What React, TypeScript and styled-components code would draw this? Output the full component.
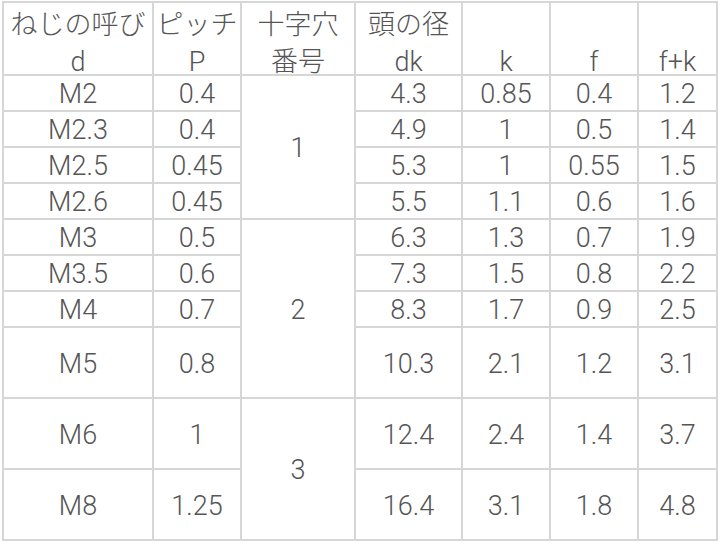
import React from "react";
import styled, { createGlobalStyle } from "styled-components";

const Global = createGlobalStyle`
  html, body { margin: 0; padding: 0; background: #ffffff; }
  body { font-family: Roboto, "Noto Sans CJK JP", sans-serif; }
`;

const Page = styled.div`
  padding: 1px 0 0 2px;
`;

const Table = styled.table`
  border-collapse: collapse;
  table-layout: fixed;
  width: 715px;
  border: 2px solid #c8c8c8;
  font-family: Roboto, "Noto Sans CJK JP", sans-serif;
  font-size: 27px;
  font-weight: 300;
  color: #555555;
`;

const Cell = styled.td<{ $h?: number }>`
  border: 2px solid #d6d6d6;
  text-align: center;
  vertical-align: middle;
  padding: 3px 0 0 0;
  height: ${(p) => (p.$h ?? 34) - 3}px;
  line-height: 31px;
  white-space: nowrap;
`;

const Head = styled.td`
  border: 2px solid #d6d6d6;
  text-align: center;
  vertical-align: top;
  padding: 0;
  height: 71px;
  white-space: nowrap;
`;

const HeadTop = styled.span`
  display: block;
  height: 47px;
  line-height: 44px;
`;

const HeadBottom = styled.span`
  display: block;
  height: 24px;
  line-height: 24px;
`;

type Row = { d: string; p: string; dk: string; k: string; f: string; fk: string; h: number; no?: string; span?: number };

const rows: Row[] = [
  { d: "M2", p: "0.4", dk: "4.3", k: "0.85", f: "0.4", fk: "1.2", h: 34, no: "1", span: 4 },
  { d: "M2.3", p: "0.4", dk: "4.9", k: "1", f: "0.5", fk: "1.4", h: 34 },
  { d: "M2.5", p: "0.45", dk: "5.3", k: "1", f: "0.55", fk: "1.5", h: 34 },
  { d: "M2.6", p: "0.45", dk: "5.5", k: "1.1", f: "0.6", fk: "1.6", h: 34 },
  { d: "M3", p: "0.5", dk: "6.3", k: "1.3", f: "0.7", fk: "1.9", h: 34, no: "2", span: 4 },
  { d: "M3.5", p: "0.6", dk: "7.3", k: "1.5", f: "0.8", fk: "2.2", h: 34 },
  { d: "M4", p: "0.7", dk: "8.3", k: "1.7", f: "0.9", fk: "2.5", h: 34 },
  { d: "M5", p: "0.8", dk: "10.3", k: "2.1", f: "1.2", fk: "3.1", h: 69 },
  { d: "M6", p: "1", dk: "12.4", k: "2.4", f: "1.4", fk: "3.7", h: 69, no: "3", span: 2 },
  { d: "M8", p: "1.25", dk: "16.4", k: "3.1", f: "1.8", fk: "4.8", h: 69 },
];

const headers: [string, string][] = [
  ["ねじの呼び", "d"],
  ["ピッチ", "P"],
  ["十字穴", "番号"],
  ["頭の径", "dk"],
  ["\u00a0", "k"],
  ["\u00a0", "f"],
  ["\u00a0", "f+k"],
];

const widths = [150, 88, 114, 107, 88, 88, 79];

export default function App() {
  return (
    <Page>
      <Global />
      <Table>
        <colgroup>
          {widths.map((w, i) => (
            <col key={i} style={{ width: w }} />
          ))}
        </colgroup>
        <tbody>
          <tr>
            {headers.map(([a, b]) => (
              <Head key={b}>
                <HeadTop>{a}</HeadTop>
                <HeadBottom>{b}</HeadBottom>
              </Head>
            ))}
          </tr>
          {rows.map((r) => (
            <tr key={r.d}>
              <Cell $h={r.h}>{r.d}</Cell>
              <Cell $h={r.h}>{r.p}</Cell>
              {r.no && <Cell rowSpan={r.span}>{r.no}</Cell>}
              <Cell $h={r.h}>{r.dk}</Cell>
              <Cell $h={r.h}>{r.k}</Cell>
              <Cell $h={r.h}>{r.f}</Cell>
              <Cell $h={r.h}>{r.fk}</Cell>
            </tr>
          ))}
        </tbody>
      </Table>
    </Page>
  );
}
